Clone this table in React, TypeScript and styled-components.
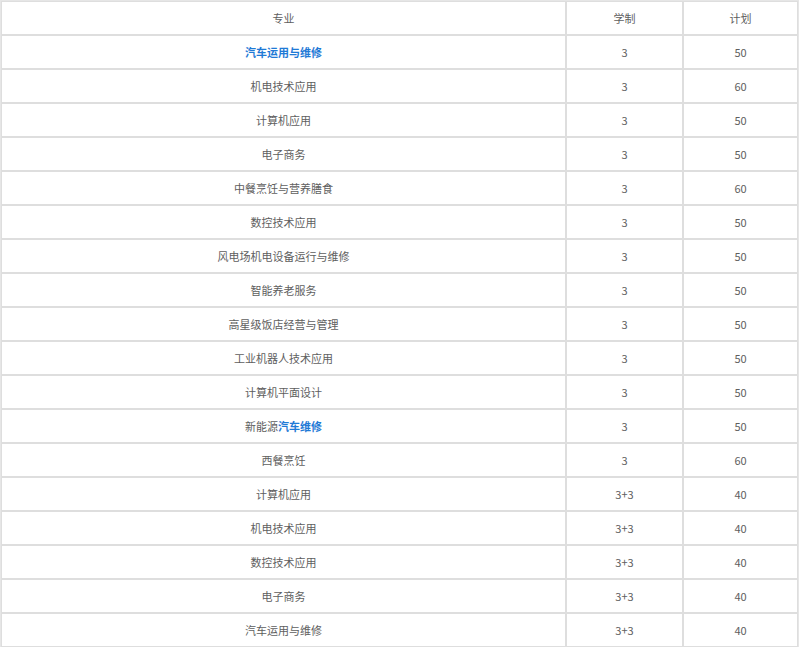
import React from 'react';
import styled, { createGlobalStyle } from 'styled-components';

const GlobalStyle = createGlobalStyle`
  html, body {
    margin: 0;
    padding: 0;
    background: #ffffff;
  }
  body {
    font-family: 'Microsoft YaHei', 'Noto Sans CJK SC', 'Noto Sans', sans-serif;
  }
`;

const Table = styled.table`
  width: 799px;
  border: 1px solid #e6e6e6;
  border-collapse: separate;
  border-spacing: 0;
  table-layout: fixed;
  font-size: 11px;
  color: #5e5e5e;
`;

const Cell = styled.td<{ $width?: number }>`
  width: ${(p) => (p.$width ? `${p.$width}px` : 'auto')};
  height: 34px;
  padding: 0;
  border: 1px solid #dedede;
  text-align: center;
  vertical-align: middle;
  line-height: 32px;
  box-sizing: border-box;
`;

const Highlight = styled.strong`
  color: #1f7ad6;
  font-weight: bold;
`;

type Row = { name: React.ReactNode; years: string; plan: string };

const rows: Row[] = [
  { name: <Highlight>汽车运用与维修</Highlight>, years: '3', plan: '50' },
  { name: '机电技术应用', years: '3', plan: '60' },
  { name: '计算机应用', years: '3', plan: '50' },
  { name: '电子商务', years: '3', plan: '50' },
  { name: '中餐烹饪与营养膳食', years: '3', plan: '60' },
  { name: '数控技术应用', years: '3', plan: '50' },
  { name: '风电场机电设备运行与维修', years: '3', plan: '50' },
  { name: '智能养老服务', years: '3', plan: '50' },
  { name: '高星级饭店经营与管理', years: '3', plan: '50' },
  { name: '工业机器人技术应用', years: '3', plan: '50' },
  { name: '计算机平面设计', years: '3', plan: '50' },
  {
    name: (
      <>
        新能源<Highlight>汽车维修</Highlight>
      </>
    ),
    years: '3',
    plan: '50',
  },
  { name: '西餐烹饪', years: '3', plan: '60' },
  { name: '计算机应用', years: '3+3', plan: '40' },
  { name: '机电技术应用', years: '3+3', plan: '40' },
  { name: '数控技术应用', years: '3+3', plan: '40' },
  { name: '电子商务', years: '3+3', plan: '40' },
  { name: '汽车运用与维修', years: '3+3', plan: '40' },
];

export default function App() {
  return (
    <>
      <GlobalStyle />
      <Table>
        <tbody>
          <tr>
            <Cell $width={565}>专业</Cell>
            <Cell $width={117}>学制</Cell>
            <Cell>计划</Cell>
          </tr>
          {rows.map((r, i) => (
            <tr key={i}>
              <Cell>{r.name}</Cell>
              <Cell>{r.years}</Cell>
              <Cell>{r.plan}</Cell>
            </tr>
          ))}
        </tbody>
      </Table>
    </>
  );
}
